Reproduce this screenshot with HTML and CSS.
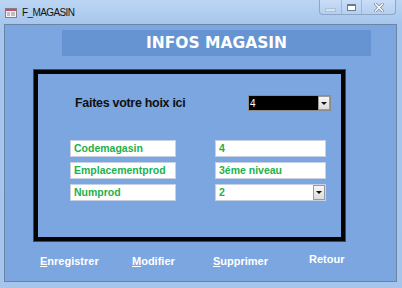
FILE: index.html
```html
<!DOCTYPE html>
<html lang="fr">
<head>
    <meta charset="UTF-8">
    <meta name="viewport" content="width=device-width, initial-scale=1.0">
    <title>F_MAGASIN</title>
    <link rel="stylesheet" href="styles.css">
</head>
<body>
    <div class="window">
        <!-- Barre de titre -->
        <div class="titlebar">
            <svg class="app-icon" width="12" height="10" viewBox="0 0 12 10">
                <rect x="0.5" y="0.5" width="11" height="9" fill="#f4f4f4" stroke="#8a7a86"/>
                <rect x="1" y="1" width="10" height="2" fill="#c0506e"/>
                <rect x="2" y="4.5" width="3" height="1" fill="#8a8a8a"/>
                <rect x="6" y="4.5" width="4" height="1" fill="#8a8a8a"/>
                <rect x="2" y="6.5" width="3" height="1" fill="#8a8a8a"/>
                <rect x="6" y="6.5" width="4" height="1" fill="#8a8a8a"/>
            </svg>
            <span class="title">F_MAGASIN</span>
            <div class="caption-buttons">
                <div class="cap-btn cap-min"><span class="min-glyph"></span></div>
                <div class="cap-btn cap-max"><span class="max-glyph"></span></div>
                <div class="cap-btn cap-close">
                    <svg width="10" height="9" viewBox="0 0 10 9">
                        <path d="M1.5 1 L8.5 8 M8.5 1 L1.5 8" stroke="#7d8a9c" stroke-width="3" stroke-linecap="square"/>
                        <path d="M1.5 1 L8.5 8 M8.5 1 L1.5 8" stroke="#ffffff" stroke-width="1.4" stroke-linecap="square"/>
                    </svg>
                </div>
            </div>
        </div>

        <div class="client">
            <div class="header-band">INFOS MAGASIN</div>

            <div class="frame">
                <div class="choice-row">
                    <span class="choice-label">Faites votre hoix ici</span>
                    <div class="combo combo-dark">
                        <span class="combo-value">4</span>
                        <span class="drop-btn"><span class="arrow"></span></span>
                    </div>
                </div>

                <div class="fields">
                    <div class="field label-field">Codemagasin</div>
                    <div class="field">4</div>
                    <div class="field label-field">Emplacementprod</div>
                    <div class="field">3éme niveau</div>
                    <div class="field label-field">Numprod</div>
                    <div class="field combo">
                        <span class="combo-value">2</span>
                        <span class="drop-btn"><span class="arrow"></span></span>
                    </div>
                </div>
            </div>

            <div class="commands">
                <span class="cmd"><u>E</u>nregistrer</span>
                <span class="cmd"><u>M</u>odifier</span>
                <span class="cmd"><u>S</u>upprimer</span>
                <span class="cmd cmd-retour">Retour</span>
            </div>
        </div>
    </div>
</body>
</html>
```

FILE: styles.css
```css
body {
    margin: 0;
    background: #a6c5ec;
    font-family: "Liberation Sans", Arial, sans-serif;
    width: 402px;
    height: 288px;
    overflow: hidden;
}

.window {
    height: 288px;
    background: linear-gradient(#bcd5f3, #a7c6ed 24px, #a6c5ec);
}

/* Barre de titre */
.titlebar {
    height: 24px;
    display: flex;
    align-items: flex-start;
}

.app-icon {
    margin: 8px 0 0 5px;
}

.title {
    margin: 7px 0 0 5px;
    font-size: 10px;
    letter-spacing: -0.6px;
    color: #111;
}

.caption-buttons {
    margin-left: auto;
    margin-right: 6px;
    display: flex;
    height: 15px;
    border: 1px solid #8ea6c6;
    border-top: none;
    border-radius: 0 0 4px 4px;
    background: linear-gradient(#c9ddf6, #b5cff1);
    box-sizing: border-box;
}

.cap-btn {
    display: flex;
    align-items: center;
    justify-content: center;
}

.cap-min {
    width: 21px;
    border-right: 1px solid #9fb6d4;
}

.cap-max {
    width: 19px;
    border-right: 1px solid #9fb6d4;
}

.cap-close {
    width: 33px;
}

.min-glyph {
    display: block;
    width: 9px;
    height: 2px;
    margin-top: 5px;
    background: #d6e3f3;
    border: 1px solid #aebfd6;
}

.max-glyph {
    display: block;
    width: 7px;
    height: 4px;
    border: 1px solid #6a7a90;
    border-top-width: 2px;
    background: #ffffff;
}

/* Zone du formulaire */
.client {
    margin: 0 5px 0 4px;
    height: 258px;
    box-sizing: border-box;
    border: 1px solid #6c83a3;
    background: #7ba6e0;
}

.header-band {
    margin: 5px 0 0 57px;
    width: 309px;
    height: 26px;
    background: #6693d1;
    color: #ffffff;
    font-family: "DejaVu Sans", sans-serif;
    font-weight: bold;
    font-size: 15.5px;
    line-height: 26px;
    text-align: center;
}

.frame {
    margin: 14px 0 0 29px;
    width: 311px;
    height: 171px;
    box-sizing: border-box;
    border: 4px solid #050505;
    outline: 1px solid #3a4a60;
}

.choice-row {
    display: flex;
    align-items: center;
    height: 16px;
    margin-top: 21px;
    padding-left: 37px;
    padding-right: 10px;
}

.choice-label {
    font-weight: bold;
    font-size: 12.5px;
    letter-spacing: -0.3px;
    color: #111;
}

.combo {
    display: flex;
    align-items: center;
    position: relative;
}

.combo-dark {
    margin-left: auto;
    width: 83px;
    height: 16px;
    box-sizing: border-box;
    background: #000;
    border: 1px solid #8c8c8c;
}

.combo-dark .combo-value {
    color: #ffffff;
    font-size: 10px;
    padding-left: 1px;
}

.combo-value {
    flex: 1;
}

.drop-btn {
    width: 12px;
    height: 100%;
    box-sizing: border-box;
    border: 1px solid #9a9a9a;
    background: linear-gradient(#f6f6f6, #dcdcdc);
    display: flex;
    align-items: center;
    justify-content: center;
}

.arrow {
    width: 0;
    height: 0;
    border-left: 3px solid transparent;
    border-right: 3px solid transparent;
    border-top: 3px solid #111;
}

.fields {
    display: grid;
    grid-template-columns: 106px 111px;
    grid-auto-rows: 17px;
    column-gap: 39px;
    row-gap: 5px;
    margin-top: 29px;
    padding-left: 32px;
}

.field {
    box-sizing: border-box;
    background: #ffffff;
    border: 1px solid #c7d1e2;
    color: #22b14c;
    font-weight: bold;
    font-size: 10.5px;
    line-height: 15px;
    padding-left: 3px;
    white-space: nowrap;
}

.field.combo {
    padding-right: 0;
}

/* Boutons de commande */
.commands {
    display: grid;
    grid-template-columns: 92px 81px 96px auto;
    align-items: start;
    margin-top: 14px;
    padding-left: 35px;
}

.cmd {
    color: #ffffff;
    font-weight: bold;
    font-size: 11px;
}

.cmd-retour {
    margin-top: -2px;
}
```
